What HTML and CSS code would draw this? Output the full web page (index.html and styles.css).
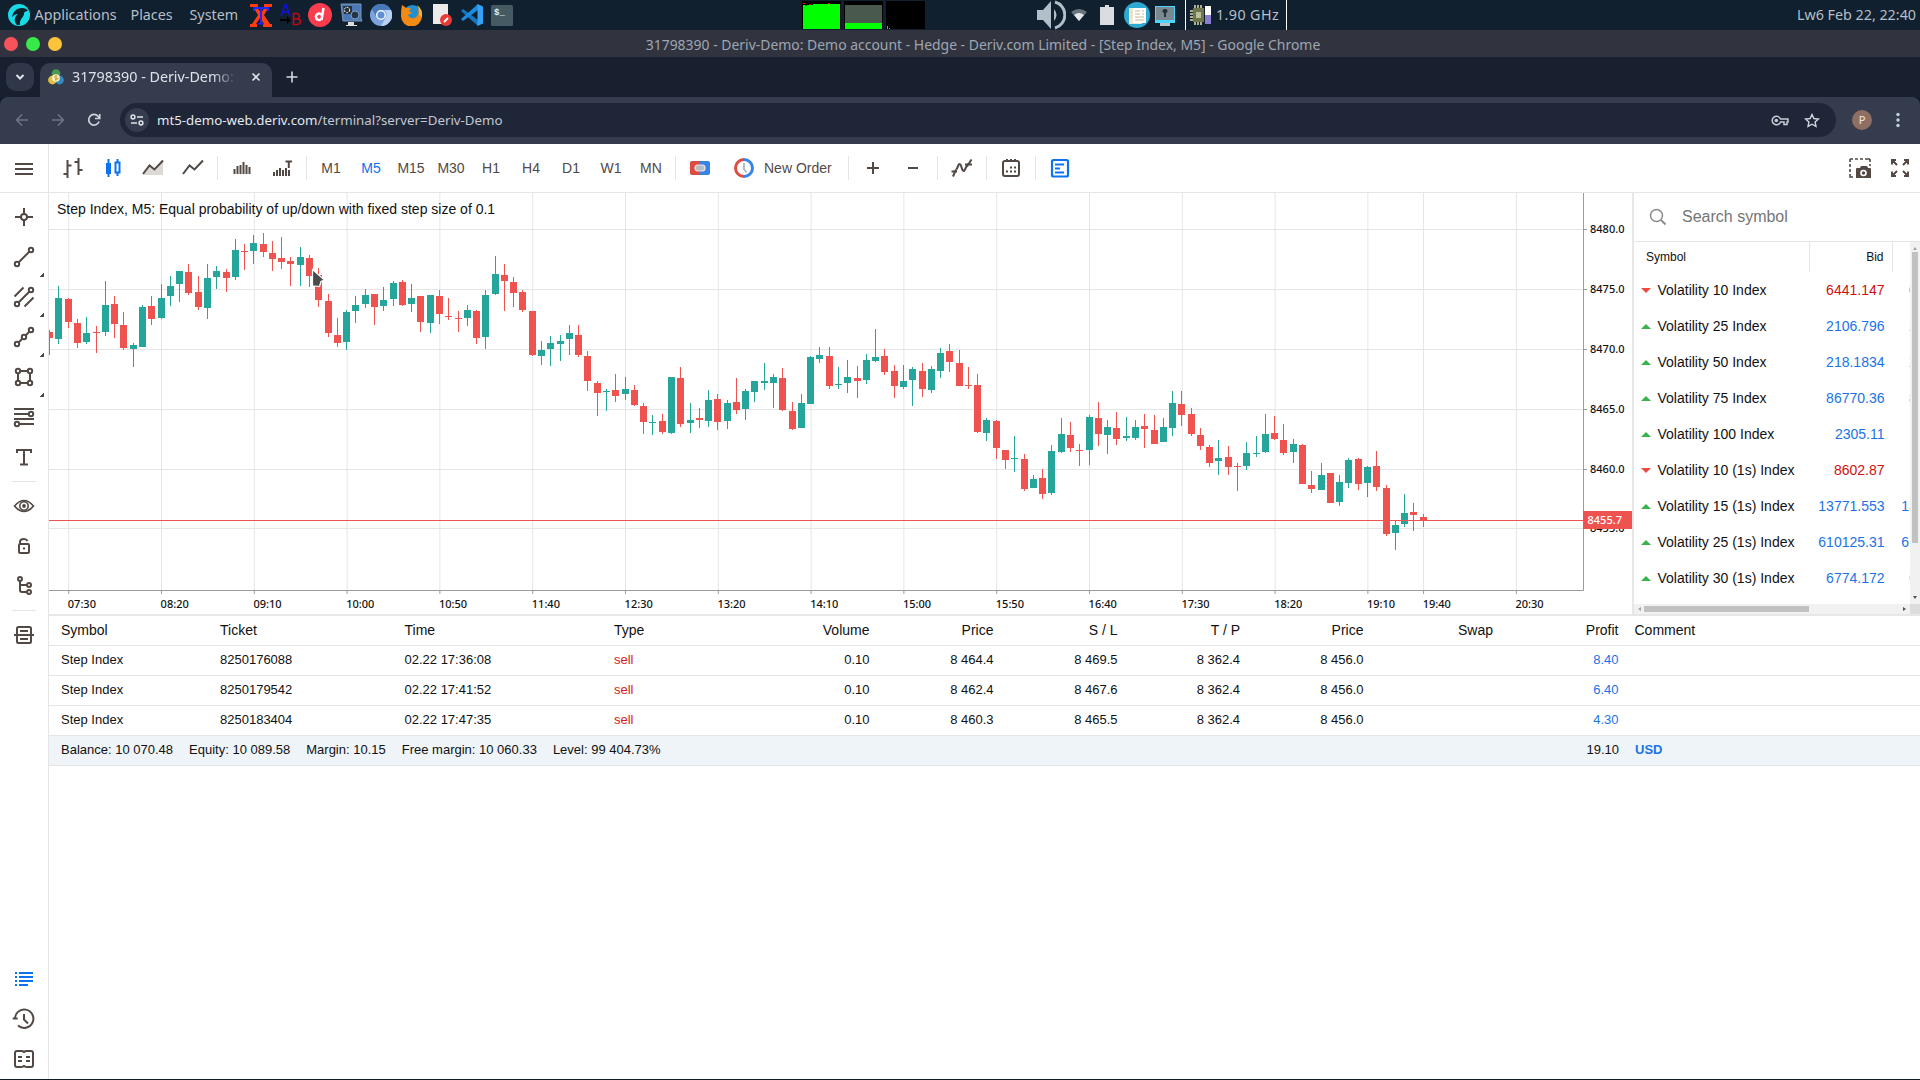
FILE: index.html
```html
<!DOCTYPE html>
<html lang="en">
<head>
<meta charset="utf-8">
<title>31798390 - Deriv-Demo</title>
<link rel="stylesheet" href="styles.css">
</head>
<body>
<header class="panel">
  <div class="panel-menu">
    <svg class="logo" width="22" height="22" viewBox="0 0 22 22"><circle cx="11" cy="11" r="11" fill="#18dbe8"/><path d="M9 21C5 17 7 12 10 10c-2 0-4 1-6 3 1-5 4-9 10-9 3 0 5 1 6 3-3 0-4 1-4 3 0 3-5 5-4 11z" fill="#0c2029"/></svg>
    <span class="m1">Applications</span><span class="m2">Places</span><span class="m3">System</span>
  </div>
  <div class="launchers">
    <svg width="22" height="24" viewBox="0 0 22 24"><path d="M0 1h8v3H7l4 6 4-6h-1V1h8v3h-3l-5 8 6 9h2v3h-9v-3h1l-4-6-4 6h1v3H0v-3h2l6-9-5-8H0z" fill="#ff3c10"/><path d="M3 4h16v4h-1.500l-1-2H12v14h2v1.500H8V20h2V6H5.500l-1 2H3z" fill="#1d28ff"/></svg>
    <svg class="ab" width="22" height="24" viewBox="0 0 22 24"><path d="M1 13 5 2h1l4 11M2 9h7" fill="none" stroke="#1010e0" stroke-width="1.600"/><path d="M0 16h7v-3l4 4-4 4v-3H0z" fill="#000"/><path d="M13.500 10.500v11h4q3-.5 3-3t-3-2.500h-4 3.500q2.500-.5 2.500-2.800t-2.500-2.700z" fill="none" stroke="#c00818" stroke-width="1.600"/></svg>
    <svg width="24" height="24" viewBox="0 0 24 24"><circle cx="12" cy="12" r="12" fill="#f93c4e"/><path d="M15.500 5l-2 12M13.800 12a3.200 3.200 0 1 0-1 4.500" fill="none" stroke="#fff" stroke-width="2.500"/></svg>
    <svg width="23" height="24" viewBox="0 0 23 24"><path d="M1 1h20v14l1 3H3z" fill="#4a79b8" stroke="#7d95b3"/><path d="M3 3h9v8H4z" fill="#2a3037"/><circle cx="7" cy="7" r="2.700" fill="none" stroke="#fff" stroke-dasharray="2 1"/><circle cx="15" cy="12" r="4" fill="#253446" stroke="#7fa0c5"/><path d="M8 19h6v3h3v1H6v-1h2z" fill="#ddd"/></svg>
    <svg class="chromium" width="22" height="22" viewBox="0 0 22 22"><circle cx="11" cy="11" r="11" fill="#7ba4dc"/><path d="M11 0a11 11 0 0 1 10 6H11a5 5 0 0 0-4.500 7L2 5a11 11 0 0 1 9-5z" fill="#4878b8"/><path d="M21 6a11 11 0 0 1-10 16l5-9a5 5 0 0 0-2-7z" fill="#b9d1f2"/><circle cx="11" cy="11" r="4.300" fill="#5d8fd2" stroke="#f0f4fa" stroke-width="1.500"/></svg>
    <svg width="22" height="22" viewBox="0 0 22 22"><circle cx="11.500" cy="10.500" r="9.500" fill="#248fd0"/><path d="M1 1q2 1 4 3 3-1 5 1l-2 2 3 2-4 2q2 4 6 3 6-2 4-9 4 2 4 7a10.500 10.500 0 0 1-21 0Q0 5 1 1z" fill="#f28a16"/><path d="M16 1q6 4 5 12l-3-2q1-5-2-10z" fill="#ffb52e"/></svg>
    <svg class="doc" width="19" height="22" viewBox="0 0 19 22"><path d="M0 0h15v20H0z" fill="#eceaea"/><circle cx="13" cy="16" r="6" fill="#e93b36"/><path d="M11 18l4-4" stroke="#fff" stroke-width="2"/></svg>
    <svg width="22" height="22" viewBox="0 0 22 22"><path d="M0 7l2-2 15 11V22z" fill="#1576bd"/><path d="M0 15l2 2L17 6V0z" fill="#1b8be0"/><path d="M16.500 0 22 2.500v17L16.500 22z" fill="#37a2f5"/></svg>
    <svg width="22" height="21" viewBox="0 0 22 21"><rect width="22" height="21" rx="1.500" fill="#455a62"/><text x="3" y="10" font-family="Liberation Mono" font-weight="700" font-size="9" fill="#e8eef0">$_</text></svg>
  </div>
  <svg class="graphs" width="124" height="30" viewBox="0 0 124 30"><path d="M0 1h39v28H0zM42 1h39v28H42zM84 1h39v28H84z" fill="#000"/><path d="M1 5h2l1 1 1-1h5l2-1h26v25H1z" fill="#0f0"/><path d="M43 5h37v18H43z" fill="#4a594d"/><path d="M43 23h37v6H43zM85 26h1v3h-1zM87 28h1v1h-1z" fill="#0f0"/><path d="M1 3h2v1H1zM7 4h2v1H7zM26 3h2v1h-2z" fill="#f00"/></svg>
  <div class="tray">
    <svg width="29" height="30" viewBox="0 0 29 30"><path d="M0 10h6l8-9v28l-8-9H0z" fill="#b2bec8"/><path d="M17 9q5 6 0 12z" fill="#b2bec8"/><path d="M18 2a13.500 13.500 0 0 1 0 26" fill="none" stroke="#b2bec8" stroke-width="3"/></svg>
    <svg class="wifi" width="16" height="12" viewBox="0 0 16 12"><path d="M0 3Q8-3 16 3L8 12z" fill="#68747e"/><path d="M3 6q5-4 10 0l-5 6z" fill="#e4e8eb"/></svg>
    <svg class="bat" width="14" height="20" viewBox="0 0 14 20"><path d="M5 0h4v2h5v18H0V2h5z" fill="#d9dde2"/></svg>
    <svg class="news" width="26" height="26" viewBox="0 0 26 26"><circle cx="13" cy="13" r="13" fill="#2eaad2"/><path d="M5 6h13v16H5z" fill="#efe6d0"/><path d="M9 6h13v15H9z" fill="#fff"/><path d="M11 9h5M11 12h5M11 15h9M11 18h9M18 9h2M18 12h2M7 10h1M7 14h1" stroke="#c8b98f"/></svg>
    <svg class="mon" width="20" height="20" viewBox="0 0 20 20"><path d="M0 0h20v17H0z" fill="#4bd5ff"/><path d="M1 1h18v13H1z" fill="#7a8990"/><path d="M5 17h10v3H5z" fill="#b7c3c9"/><path d="M10 3a2 2 0 0 1 1 4v4H9V7a2 2 0 0 1 1-4z" fill="#22313a"/></svg>
    <i class="bar"></i>
    <svg class="cpu" width="22" height="20" viewBox="0 0 22 20"><path d="M3 3h11v14H3z" fill="#6d764c"/><path d="M5 0v3M8 0v3M11 0v3M5 17v3M8 17v3M11 17v3M0 6h3M0 9h3M0 12h3M0 15h3" stroke="#e3ddaf" stroke-width="1.500"/><path d="M6 7h5v6H6z" fill="#b9bf9b"/><path d="M15 1h6v18h-6z" fill="#fff"/><path d="M15 10h6v9h-6z" fill="#8880cf"/></svg>
    <span>1.90 GHz</span><i class="bar"></i>
  </div>
  <time>Lw6 Feb 22, 22:40</time>
</header>

<div class="titlebar">
  <i class="light red"></i><i class="light green"></i><i class="light yellow"></i>
  <h1>31798390 - Deriv-Demo: Demo account - Hedge - Deriv.com Limited - [Step Index, M5] - Google Chrome</h1>
</div>

<div class="tabstrip">
  <div class="tab-search"><svg width="10" height="8" viewBox="0 0 10 8"><path d="M1.500 2 5 5.500 8.500 2" fill="none" stroke="#e0e3ea" stroke-width="2"/></svg></div>
  <div class="tab">
    <svg width="16" height="16" viewBox="0 0 16 16"><circle cx="8" cy="4.500" r="4.300" fill="#4a9a54"/><circle cx="4.500" cy="11" r="4.400" fill="#e2c03c"/><circle cx="11.500" cy="11" r="4.400" fill="#3489bd"/><circle cx="8" cy="9" r="3.800" fill="#fff8df"/><path d="M9.500 7.200q-3-1-3 .7t3 1.500-3 1.500M8 6v6" fill="none" stroke="#d89d24"/></svg>
    <span>31798390 - Deriv-Demo:</span>
    <svg width="10" height="10" viewBox="0 0 10 10"><path d="m1.500 1.500 7 7m0-7-7 7" stroke="#e0e3ea" stroke-width="1.600"/></svg>
  </div>
  <svg class="plus" width="12" height="12" viewBox="0 0 12 12"><path d="M6 .5v11M.5 6h11" stroke="#d5d9e2" stroke-width="1.600"/></svg>
</div>

<div class="navbar">
  <svg class="nav" width="14" height="14" viewBox="0 0 14 14"><path d="M13 7H2M7 1.500 1.500 7 7 12.500" fill="none" stroke="#6d7482" stroke-width="1.600"/></svg>
  <svg class="nav" width="14" height="14" viewBox="0 0 14 14"><path d="M1 7h11M7 1.500 12.500 7 7 12.500" fill="none" stroke="#6d7482" stroke-width="1.600"/></svg>
  <svg class="nav" width="14" height="14" viewBox="0 0 14 14"><path d="M12 8.500A5.300 5.300 0 1 1 11 3.300L12.500 5M12.700 1v4.500H8" fill="none" stroke="#cfd3dc" stroke-width="1.700"/></svg>
  <div class="omnibox">
    <span class="site"><svg width="14" height="12" viewBox="0 0 14 12"><g fill="none" stroke="#e0e3ea" stroke-width="1.500"><circle cx="3" cy="3" r="1.900"/><path d="M7 3h6M1 9h6"/><circle cx="11" cy="9" r="1.900"/></g></svg></span>
    <p>mt5-demo-web.deriv.com<b>/terminal?server=Deriv-Demo</b></p>
    <svg class="key" width="18" height="13" viewBox="0 0 18 13"><path d="M9.500 5H17v3h-1v2.500h-3V8H9.500A4.300 4.300 0 1 1 9.500 5z" fill="none" stroke="#c8ccd4" stroke-width="1.500"/><circle cx="5.300" cy="6.500" r="1.800" fill="#c8ccd4"/></svg>
    <svg width="16" height="15" viewBox="0 0 16 15"><path d="m8 1.500 1.900 4 4.500.5-3.300 3 .9 4.400L8 11.200l-4 2.200.9-4.400L1.600 6l4.500-.5z" fill="none" stroke="#d0d4dc" stroke-width="1.400"/></svg>
  </div>
  <span class="avatar">P</span>
  <svg class="dots" width="4" height="16" viewBox="0 0 4 16"><g fill="#c6d3dc"><circle cx="2" cy="2.500" r="1.700"/><circle cx="2" cy="8" r="1.700"/><circle cx="2" cy="13.500" r="1.700"/></g></svg>
</div>

<main class="terminal">
  <div class="toolbar">
    <div class="burger"><svg width="18" height="14" viewBox="0 0 18 14"><path d="M0 2h18M0 7h18M0 12h18" stroke="#524945" stroke-width="2"/></svg></div>
    <div class="tools">
      <span class="cell"><svg viewBox="0 0 24 24"><path d="M6.500 4v18M2.500 18h4M6.500 9.500h4M17.500 2v17M13.500 6h4M17.500 14h4"/></svg></span>
      <span class="cell on"><svg viewBox="0 0 24 24"><path d="M7.500 3v18M16.500 3v3M16.500 17v3M14.500 6.500h4v10h-4z"/><path class="solid" d="M5 7h5v11H5z"/></svg></span>
      <span class="cell"><svg viewBox="0 0 24 24"><path class="soft" d="M2 19l7-9 6 4 7-10v15z"/><path d="m2 18 6.500-8.500 5 4L22 4.500"/></svg></span>
      <span class="cell"><svg viewBox="0 0 24 24"><path d="m2 18 6.500-8.500 5 4L22 4.500"/></svg></span>
      <i class="sep"></i>
      <span class="cell"><svg viewBox="0 0 24 24"><path d="M4.500 18v-5M7.500 18v-8M10.500 18V9M13.500 18V6M16.500 18V9M19.500 18v-7"/></svg></span>
      <span class="cell"><svg viewBox="0 0 24 24"><path d="M4 20v-4M7 20v-6M10 20v-8M13 20v-6M16 20v-8M19 20v-6M15.500 5.500H22M18.800 5v7"/></svg></span>
      <i class="sep"></i>
      <span class="cell">M1</span><span class="cell on">M5</span><span class="cell">M15</span><span class="cell">M30</span><span class="cell">H1</span><span class="cell">H4</span><span class="cell">D1</span><span class="cell">W1</span><span class="cell">MN</span>
      <i class="sep"></i>
      <span class="cell"><svg class="oct" viewBox="0 0 24 24"><path d="M4 5h8v14H4q-2 0-2-2V7q0-2 2-2z" fill="#dc4d41"/><path d="M12 5h8q2 0 2 2v10q0 2-2 2h-8z" fill="#3585ec"/><rect x="6.500" y="8.500" width="11" height="7" rx="3" fill="#f1dcdd"/><rect x="8" y="9.500" width="8" height="5" rx="2" fill="#b0bec5"/></svg></span>
      <span class="order"><svg viewBox="0 0 24 24"><path d="M12 3.500a8.500 8.500 0 0 0 0 17" stroke="#dc4d41" stroke-width="3"/><path d="M12 3.500a8.500 8.500 0 0 1 0 17" stroke="#3585ec" stroke-width="3"/><path d="M12 7v6l2.500 3.500" stroke="#b0bec5"/></svg>New Order</span>
      <i class="sep"></i>
      <span class="cell"><svg viewBox="0 0 24 24"><path d="M12 6v12M6 12h12"/></svg></span>
      <span class="cell"><svg viewBox="0 0 24 24"><path d="M7 12h10"/></svg></span>
      <i class="sep"></i>
      <span class="cell"><svg viewBox="0 0 24 24"><path d="M3 20.500l3-7M1.500 15.500H7M6.500 13.500l2-4.500q1.200-2 2.200 0l1.800 5q1.200 2 2.200 0L18 7.500M15 8.500h7M17 10.500l4.500-7"/></svg></span>
      <i class="sep"></i>
      <span class="cell"><svg viewBox="0 0 24 24"><rect x="4" y="5" width="16" height="15" rx="2"/><path d="M8 3v3M12 3v3M16 3v3M7 15.500h2M11 15.500h2M15 15.500h2M11 11.500h2M15 11.500h2"/></svg></span>
      <i class="sep"></i>
      <span class="cell on"><svg viewBox="0 0 24 24"><rect x="4" y="4" width="16" height="16.500" rx="1.500" stroke-width="2.200"/><path d="M7 8.500h9M7 12.500h5M7 16.500h9"/></svg></span>
    </div>
    <div class="right-tools">
      <span class="cell"><svg viewBox="0 0 24 24"><path d="M2 6V3M5 3H2M7 3h3M12 3h3M17 3h5M22 3v3M2 8v3M2 13v3M2 18v3h3M22 8v2" stroke-width="1.600"/><path class="solid" d="M9 12h3l1-2h6l1 2h2q1 0 1 1v9H8v-9q0-1 1-1z"/><circle cx="15.500" cy="17" r="2.500" stroke="#fff" stroke-width="1.600"/></svg></span>
      <span class="cell"><svg viewBox="0 0 24 24"><path d="m9 9-5-5M4 8.500V4h4M15 9l5-5M16 4h4v4.500M9 15l-5 5M4 15.500V20h4M15 15l5 5M16 20h4v-4.500"/></svg></span>
    </div>
  </div>

  <div class="workspace">
    <aside class="rail">
      <span class="item"><svg viewBox="0 0 24 24"><circle cx="12" cy="12" r="3"/><path d="M12 3v6M12 15v6M3 12h6M15 12h6"/></svg></span>
      <span class="item more"><svg viewBox="0 0 24 24"><circle cx="5" cy="19" r="2.200"/><circle cx="19" cy="5" r="2.200"/><path d="M6.500 17.500l11-11"/></svg></span>
      <span class="item more"><svg viewBox="0 0 24 24"><circle cx="5" cy="19" r="2.200"/><circle cx="19" cy="5" r="2.200"/><path d="M6.500 17.500l11-11M2.500 11.500l9-9M12.500 21.500l9-9"/></svg></span>
      <span class="item more"><svg viewBox="0 0 24 24"><circle cx="5" cy="19" r="2.200"/><circle cx="12" cy="12" r="2.200"/><circle cx="19" cy="5" r="2.200"/><path d="M6.500 17.500l4-4M13.500 10.500l4-4"/></svg></span>
      <span class="item more"><svg viewBox="0 0 24 24"><circle cx="6" cy="6" r="2.200"/><circle cx="18" cy="6" r="2.200"/><circle cx="6" cy="18" r="2.200"/><circle cx="18" cy="18" r="2.200"/><path d="M8 6h8M8 18h8M6 8v8M18 8v8"/></svg></span>
      <span class="item"><svg viewBox="0 0 24 24"><path d="M2 4h20M2 9h15M2 14h20M7 19h15"/><circle cx="19" cy="9" r="2.200"/><circle cx="5" cy="19" r="2.200"/></svg></span>
      <span class="item"><svg viewBox="0 0 24 24"><path d="M5 8V5h14v3M12 5v14M8 19.500h8"/></svg></span>
      <i class="rule"></i>
      <span class="item"><svg viewBox="0 0 24 24"><path d="M2.500 12q9.500-11 19 0-9.500 11-19 0z" stroke-width="1.600"/><circle cx="12" cy="12" r="4.200" stroke-width="1.600"/><circle class="solid" cx="12" cy="12" r="1.900"/></svg></span>
      <span class="item"><svg viewBox="0 0 24 24"><rect x="7" y="10" width="10" height="9" rx="1"/><path d="M8 9.500V8q0-3 4-3 2.500 0 3.500 2M12 13.500v2"/></svg></span>
      <span class="item"><svg viewBox="0 0 24 24"><circle cx="8" cy="5" r="2"/><circle cx="17" cy="11" r="2"/><circle cx="17" cy="18" r="2"/><path d="M8 7v9q0 2 2 2h5M8 11h7"/></svg></span>
      <i class="rule"></i>
      <span class="item"><svg viewBox="0 0 24 24"><rect x="5" y="4" width="14" height="16" rx="1.500"/><path d="M2 12h20M8 8h8M8 16h8"/></svg></span>
      <div class="push"></div>
      <span class="item on"><svg viewBox="0 0 24 24"><path d="M3 6h2M7 6h14M3 10h2M7 10h14M3 14h2M7 14h14M3 18h2M7 18h9"/></svg></span>
      <span class="item"><svg viewBox="0 0 24 24"><path d="M3 12.500a9.200 9.200 0 1 1 3 6M.7 11.500h5M12 7v5.500l4 4"/></svg></span>
      <span class="item"><svg viewBox="0 0 24 24"><path d="M12 4.500Q10.500 4 9 4H5Q3 4 3 6v12q0 2 2 2h4q1.500 0 3-1 1.500 1 3 1h4q2 0 2-2V6q0-2-2-2h-4q-1.500 0-3 .5zM6 10h4M6 14h4M14 10h4M14 14h4M12 4v2M12 18v2"/></svg></span>
    </aside>

    <div class="content">
      <div class="upper">
        <svg class="chart" id="chart" width="1583" height="421" viewBox="49 193 1583 421"></svg>
        <section class="watch">
          <div class="search"><svg width="18" height="18" viewBox="0 0 18 18"><circle cx="7.500" cy="7.500" r="6" fill="none" stroke="#8a8a8a" stroke-width="1.500"/><path d="m12 12 4.500 4.500" stroke="#8a8a8a" stroke-width="1.800"/></svg>Search symbol</div>
          <div class="list">
            <div class="quotes">
              <div class="q head"><span>Symbol</span><span>Bid</span></div>
              <div class="q down"><span>Volatility 10 Index</span><span>6441.147</span><span>6441.500</span></div>
              <div class="q"><span>Volatility 25 Index</span><span>2106.796</span><span>2107.012</span></div>
              <div class="q"><span>Volatility 50 Index</span><span>218.1834</span><span>218.2100</span></div>
              <div class="q"><span>Volatility 75 Index</span><span>86770.36</span><span>86790.10</span></div>
              <div class="q"><span>Volatility 100 Index</span><span>2305.11</span></div>
              <div class="q down"><span>Volatility 10 (1s) Index</span><span>8602.87</span></div>
              <div class="q"><span>Volatility 15 (1s) Index</span><span>13771.553</span><span>13772.100</span></div>
              <div class="q"><span>Volatility 25 (1s) Index</span><span>610125.31</span><span>610160.20</span></div>
              <div class="q"><span>Volatility 30 (1s) Index</span><span>6774.172</span><span>6774.500</span></div>
            </div>
            <div class="vbar"><i class="arr up"></i><i class="thumb"></i><i class="arr dn"></i></div>
            <div class="hbar"><i class="arr lt"></i><i class="thumb"></i><i class="arr rt"></i></div>
            <div class="corner"></div>
          </div>
        </section>
      </div>

      <section class="trades">
        <div class="row th"><span>Symbol</span><span>Ticket</span><span>Time</span><span>Type</span><span>Volume</span><span>Price</span><span>S / L</span><span>T / P</span><span>Price</span><span>Swap</span><span>Profit</span><span>Comment</span></div>
        <div class="row"><span>Step Index</span><span>8250176088</span><span>02.22 17:36:08</span><span class="sell">sell</span><span>0.10</span><span>8 464.4</span><span>8 469.5</span><span>8 362.4</span><span>8 456.0</span><span></span><span class="gain">8.40</span><span></span></div>
        <div class="row"><span>Step Index</span><span>8250179542</span><span>02.22 17:41:52</span><span class="sell">sell</span><span>0.10</span><span>8 462.4</span><span>8 467.6</span><span>8 362.4</span><span>8 456.0</span><span></span><span class="gain">6.40</span><span></span></div>
        <div class="row"><span>Step Index</span><span>8250183404</span><span>02.22 17:47:35</span><span class="sell">sell</span><span>0.10</span><span>8 460.3</span><span>8 465.5</span><span>8 362.4</span><span>8 456.0</span><span></span><span class="gain">4.30</span><span></span></div>
        <div class="total"><div class="sums"><span>Balance: 10 070.48</span><span>Equity: 10 089.58</span><span>Margin: 10.15</span><span>Free margin: 10 060.33</span><span>Level: 99 404.73%</span></div><span class="sum">19.10</span><span class="cur">USD</span></div>
      </section>
    </div>
  </div>
</main>
<svg class="pointer" width="16" height="22" viewBox="0 0 16 22"><path d="M1.500 1.500v16.500l2.500 0 4.500.5 1.500-5 3.500-1.500z" fill="#4b4b4b" stroke="#fff" stroke-width="1.200"/></svg>
<script src="chart.js"></script>
</body>
</html>
```
FILE: styles.css
```css
* { box-sizing: border-box; }
html, body { margin: 0; height: 100%; overflow: hidden; }
body { display: flex; flex-direction: column; background: #111c28; font-family: "Liberation Sans", sans-serif; color: #111; position: relative; }
svg { display: block; flex: none; }
i { display: block; flex: none; }
span { white-space: nowrap; }

/* desktop panel */
.panel { height: 30px; flex: none; display: flex; align-items: center; background: #11202e; color: #b4bfc9; font: 14.3px/30px "Noto Sans", sans-serif; }
.panel-menu { display: flex; align-items: center; width: 250px; padding-left: 8px; }
.m1 { width: 96px; margin-left: 4.500px; }
.m2 { width: 59px; }
.launchers { display: flex; align-items: center; gap: 8px; width: 552px; }
.launchers .ab { margin-right: -2px; }
.chromium { margin: 0 1px 0 -1px; }
.doc { margin: 0 1px 0 2px; }
.graphs { margin-right: 111px; }
.tray { display: flex; align-items: center; width: 250px; letter-spacing: .4px; }
.wifi { margin-left: 5px; }
.bat { margin-left: 13px; }
.news { margin-left: 10px; }
.mon { margin: 2px 10px 0 5px; }
.bar { width: 1px; height: 30px; background: #fff; }
.cpu { margin: 0 4px 0 4px; }
.tray span { width: 70px; }
.panel time { margin-left: auto; padding-right: 4px; }

/* window title */
.titlebar { height: 27px; flex: none; display: flex; align-items: center; background: #31343f; padding-left: 4px; }
.light { width: 14px; height: 14px; border-radius: 50%; margin-right: 8px; }
.red { background: #f8525a; }
.green { background: #38e94a; }
.yellow { background: #fcc43a; }
.titlebar h1 { margin: 2px 24px 0 0; flex: 1; text-align: center; font: 13.950px/22px "Noto Sans", sans-serif; color: #9ea6b3; }

/* browser chrome */
.tabstrip { height: 40px; flex: none; display: flex; align-items: flex-end; background: #182030; padding-left: 6px; }
.tab-search { width: 28px; height: 28px; border-radius: 10px; margin: 0 6px 6px 0; background: #2f3749; display: flex; align-items: center; justify-content: center; }
.tab { width: 232px; height: 34px; display: flex; align-items: center; padding: 0 11px 6px 8px; border-radius: 10px 10px 0 0; background: #343c4d; color: #dfe2ea; font: 14.3px/20px "Noto Sans", sans-serif; }
.tab span { width: 165px; margin: 0 14px 0 8px; mask-image: linear-gradient(90deg, #000 85%, transparent); }
.plus { margin: 0 0 14px 14px; }
.navbar { height: 47px; flex: none; display: flex; align-items: center; background: linear-gradient(#343c4d, #343c4d) padding-box; padding: 0 20px 1px 15px; border-radius: 8px 8px 0 0; }
.nav { margin-right: 22px; }
.omnibox { width: 1716px; height: 34px; margin-left: -3px; border-radius: 17px; background: #1e2637; display: flex; align-items: center; padding: 0 16px 0 5px; }
.site { width: 24px; height: 24px; border-radius: 50%; background: #343c4d; display: flex; align-items: center; justify-content: center; }
.omnibox p { flex: 1; margin: 0 0 0 8px; font: 13.300px/20px "Noto Sans", sans-serif; color: #e6e8ee; }
.omnibox b { font-weight: 400; color: #c3c7d1; }
.key { margin-right: 15px; }
.avatar { width: 20px; height: 20px; border-radius: 50%; margin-left: 16px; background: #8f6f63; color: #f1e9e5; text-align: center; font: 11px/20px "Noto Sans", sans-serif; }
.dots { margin-left: 24px; }

/* terminal */
.terminal { height: 935px; background: #fff; display: flex; flex-direction: column; }
.toolbar { height: 49px; flex: none; display: flex; border-bottom: 1px solid #e5e5e5; color: #524945; }
.burger { width: 49px; border-right: 1px solid #e5e5e5; padding: 18px 0 0 15px; }
.tools { display: flex; align-items: center; padding-left: 4px; flex: 1; height: 48px; }
.cell, .item { width: 40px; height: 40px; display: flex; align-items: center; justify-content: center; }
.cell { font: 14px/40px "Liberation Sans", sans-serif; }
.cell svg, .item svg, .order svg { width: 24px; height: 24px; fill: none; stroke: currentColor; stroke-width: 2; }
.cell .oct { stroke: none; }
.solid { fill: currentColor; stroke: none; }
.soft { fill: #ddd9d7; stroke: none; }
.on { color: #0b72f0; }
.sep { width: 9px; height: 24px; background: linear-gradient(#e5e5e5, #e5e5e5) 4px 0 / 1px 100% no-repeat; }
.order { width: 124px; display: flex; align-items: center; gap: 8px; padding-left: 12px; font-size: 14px; }
.right-tools { display: flex; align-items: center; }
.workspace { flex: 1; display: flex; min-height: 0; }
.rail { width: 49px; border-right: 1px solid #e5e5e5; display: flex; flex-direction: column; padding: 4px 4px 0; color: #524945; }
.item { flex: none; }
.more { background: linear-gradient(135deg, transparent 50%, #524945 50%) 36px 36px / 4px 4px no-repeat; }
.rule { height: 1px; width: 24px; margin: 4px 8px; background: #e5e5e5; }
.push { flex: 1; }
.content { flex: 1; min-width: 0; }
.upper { display: flex; height: 423px; border-bottom: 2px solid #e7e7e7; }

.watch { flex: 1; border-left: 2px solid #e7e7e7; display: flex; flex-direction: column; min-width: 0; }
.search { height: 49px; flex: none; border-bottom: 1px solid #e5e5e5; display: flex; align-items: center; gap: 15px; padding: 0 0 0 15px; font-size: 16px; color: #757575; }
.list { flex: 1; display: grid; grid-template-columns: 1fr 10px; grid-template-rows: 1fr 10px; min-height: 0; }
.quotes { overflow: hidden; min-width: 0; min-height: 0; }
.q { display: grid; grid-template-columns: 176px 83px 83px; height: 36px; line-height: 36px; font-size: 14px; }
.q span { text-align: right; padding-right: 8.500px; color: #1a73e8; }
.q span:first-child { text-align: left; color: #111; padding: 0; display: flex; align-items: center; }
.q span:first-child::before { content: ""; flex: none; border: 5px solid transparent; border-top: 0; border-bottom: 5px solid #3bb24a; margin: 0 6.500px 0 7px; }
.q.down span { color: #d10f0f; }
.q.down span:first-child { color: #111; }
.q.down span:first-child::before { border-top: 5px solid #ea4b45; border-bottom: 0; }
.q.head { height: 30px; line-height: 30px; font-size: 12px; }
.q.head span, .q.head span:first-child { color: #111; border-right: 1px solid #e5e5e5; }
.q.head span:first-child { padding-left: 12px; }
.q.head span:first-child::before { display: none; }
.vbar { background: #f1f1f1; display: flex; flex-direction: column; align-items: center; padding: 5px 0; }
.vbar .thumb { width: 6px; height: 291px; margin-top: 2px; background: #c1c1c1; }
.hbar { background: #f1f1f1; display: flex; align-items: center; padding: 0 4px; }
.hbar .thumb { height: 6px; width: 165px; margin: 0 auto 0 3px; background: #c1c1c1; }
.corner { background: #dcdcdc; }
.arr { border: 2px solid transparent; }
.up { border-top: 0; border-bottom: 3px solid #a3a3a3; }
.dn { border-bottom: 0; border-top: 3px solid #505050; margin-top: auto; }
.lt { border-left: 0; border-right: 3px solid #a3a3a3; }
.rt { border-right: 0; border-left: 3px solid #505050; }

.row { display: grid; grid-template-columns: 159px 184.500px 209.500px 85px 170.500px 124px 124px 122.500px 123.500px 129.500px 125.500px 1fr; height: 30px; padding-left: 12px; line-height: 28px; font-size: 13px; border-bottom: 1px solid #e5e5e5; }
.row span:nth-child(n+5):nth-child(-n+11) { text-align: right; }
.row span:nth-child(12) { padding-left: 16px; }
.th { font-size: 14px; }
.sell { color: #d61a1a; }
.gain, .cur { color: #1a73e8; }
.total { display: flex; height: 30px; padding-left: 12px; line-height: 28px; font-size: 13px; background: #eff4f8; border-bottom: 1px solid #e5e5e5; }
.sums { display: flex; gap: 16px; flex: 1; }
.cur { width: 301px; padding-left: 16px; font-weight: 700; }

/* chart */
.grid { stroke: #e5e5e5; stroke-width: 1; }
.axis { stroke: #9b9b9b; stroke-width: 1; fill: none; }
.price { stroke: #ef5350; stroke-width: 1; }
.rise { fill: #26a69a; }
.fall { fill: #ef5350; }
.lbl { font: 500 11px "Noto Sans", sans-serif; fill: #111; }
.tag { fill: #fff; }
.cap { font: 14px "Liberation Sans", sans-serif; fill: #111; }

.pointer { position: absolute; left: 311px; top: 268px; }
```
FILE: chart.js
```javascript
// Each block: y origin, then candles as direction, high, body top, body bottom, low (1/3 px below the origin).
const blocks = [
  [190, `R 420 426 444 495,G 288 324 447 462,R 324 327 396 414,R 387 399 459 474,G 381 429 456 462,R 408 426 429 489,G 273 345 426 438,R 318 342 402 444,R 366 405 474 480,G 459 465 477 531,G 345 351 471 471,R 318 348 387 405,G 282 324 384 387,G 258 288 318 348,G 243 243 282 336,R 222 246 309 315,R 258 306 351 360,G 222 264 354 387,G 228 243 261 297,R 237 246 264 306,G 147 180 261 270,R 162 183 186 240,G 135 159 183 222,R 129 162 186 201,R 153 189 207 243,R 141 204 216 237,R 201 213 222 288,G 171 201 225 288,R 195 204 258 291,R 234 255 330 351,R 312 333 429 441,R 384 435 459 471,G 360 366 456 480,G 318 345 363 399,G 297 315 342 354,R 312 312 351 405,G 291 330 348 363,G 273 279 327 348`],
  [220, `R 180 186 255 258,G 192 234 252 276,R 228 228 306 336,G 225 225 309 339,R 210 228 282 312,R 234 288 291 300,R 273 294 297 336,G 255 270 294 318,R 270 273 354 372,G 210 225 351 387,G 108 162 222 225,R 132 165 183 273,R 171 186 219 261,R 210 216 270 276,R 273 273 405 408,G 363 390 408 435,G 348 369 387 438,G 345 363 372 423,G 315 339 357 405,R 315 345 405 411,R 393 408 483 513,R 483 489 519 588,G 507 513 516 573,R 462 510 528 546,G 471 507 522 540,R 495 510 555 558,R 549 558 606 642,G 585 606 609 645,R 582 603 636 642,G 471 471 639 642,R 441 474 612 621,G 549 600 609 639,R 564 594 600 624,G 510 540 603 621,R 522 537 606 630,G 540 549 603 627,R 474 546 570 582,G 507 513 567 600,G 483 483 516 546,G 429 483 489 510,G 462 471 489 564`],
  [310, `R 174 204 300 303,R 276 303 357 360,G 252 279 354 354,G 138 141 282 282,G 111 135 147 159,R 111 138 228 237,G 171 222 225 237,G 150 201 219 249,R 168 204 213 264,G 132 150 210 222,G 57 141 153 156,R 117 138 186 195,R 165 183 228 264,G 165 213 231 237,G 171 177 210 288,R 159 183 237 261,G 168 177 240 249,G 114 129 183 204,R 102 123 156 186,R 120 159 228 228,R 171 225 228 237,R 192 225 366 369,G 324 330 369 393,R 330 333 414 447,R 420 420 450 477,G 378 444 447 486,R 432 447 537 543,G 495 507 534 534,R 477 504 552 567,G 405 423 549 555,G 324 372 426 429,R 336 375 414 426,R 402 420 423 468,G 315 321 420 465,R 276 324 372 408,G 330 351 375 432,R 306 354 387 405,G 321 378 384 393,G 330 351 384 390,R 312 348 357 414,R 315 360 402 402,G 324 351 396 396,G 243 279 354 378`],
  [360, `R 93 132 165 198,R 144 162 222 228,R 204 225 258 270,R 255 261 309 321,G 240 294 303 345,R 258 291 321 345,R 309 318 321 393,G 246 279 318 330,G 228 279 282 291,G 162 222 276 279,R 168 219 237 240,R 192 240 279 285,G 237 252 276 309,R 252 255 372 372,R 333 375 387 399,G 309 345 390 390,R 339 339 429 429,G 345 366 426 438,G 294 300 369 384,R 294 297 372 390,G 318 321 369 411,R 273 318 381 393,R 375 384 522 528,G 483 495 519 570,G 402 459 492 501,R 429 456 465 513,R 462 471 483 501`]
];
const STEP = 9.28;
const times = ["07:30", "08:20", "09:10", "10:00", "10:50", "11:40", "12:30", "13:20", "14:10", "15:00", "15:50", "16:40", "17:30", "18:20", "19:10"]
  .map((t, i) => [i * 10, t]).concat([[146, "19:40"], [156, "20:30"]]);
const prices = [[229, "8480.0"], [289, "8475.0"], [349, "8470.0"], [409, "8465.0"], [469, "8460.0"], [528, "8455.0"]];

let out = "";
for (const [k, t] of times) {
  const x = 68.7 + k * STEP;
  out += `<path class="grid" d="M${x} 193V590"/><path class="axis" d="M${x} 590v4"/><text class="lbl" x="${x - .9}" y="608">${t}</text>`;
}
for (const [y, p] of prices) {
  out += `<path class="grid" d="M49 ${y + .5}H1583"/><path class="axis" d="M1583 ${y + .5}h4"/><text class="lbl" x="1590" y="${y + 4}">${p}</text>`;
}
out += `<path class="axis" d="M49 590.5H1583.5V193"/>`;
let k = -2;
for (const [top, data] of blocks) {
  for (const c of data.split(",")) {
    const [dir, ...v] = c.split(" ");
    const [hi, bt, bb, lo] = v.map(n => top + Math.round(n / 3));
    const x = Math.floor(68.25 + k++ * STEP);
    out += `<path class="${dir === "R" ? "fall" : "rise"}" d="M${x} ${hi}h1V${lo}h-1zM${x - 3} ${bt}h7V${bb}h-7z"/>`;
  }
}
out += `<path class="price" d="M49 520.500H1583"/><rect class="fall" x="1583" y="511" width="49" height="18"/><text class="lbl tag" x="1587.500" y="524">8455.7</text>`;
out += `<text class="cap" x="57" y="214">Step Index, M5: Equal probability of up/down with fixed step size of 0.1</text>`;
document.getElementById("chart").innerHTML = out;
```
